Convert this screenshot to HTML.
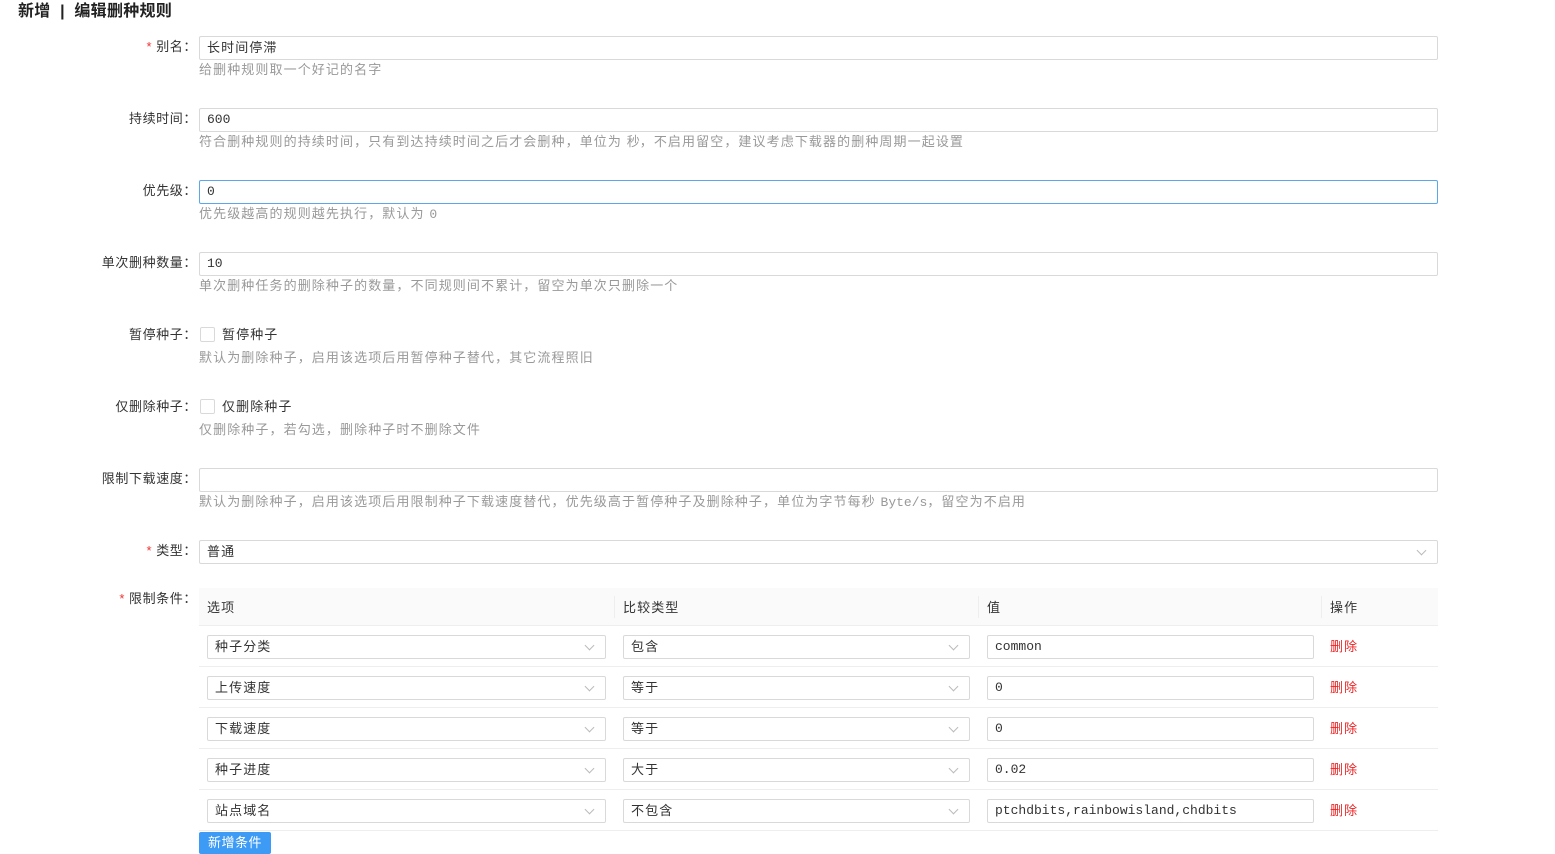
<!DOCTYPE html><html><head><meta charset="utf-8"><style>
*{box-sizing:border-box;margin:0;padding:0}
body{width:1555px;height:852px;overflow:hidden;background:#fff;font-family:"Liberation Sans","Noto Sans CJK SC",sans-serif;font-size:13px;color:#333;position:relative;letter-spacing:1.1px}
.a{position:absolute}
.t{left:18px;top:1px;font-size:16px;font-weight:bold;color:#222;line-height:22px;letter-spacing:0.3px}
.lb{right:1358px;width:200px;text-align:right;line-height:24px;color:#333;letter-spacing:0.6px}
.lb .s{color:#e33;margin-right:4px}
.in{left:199px;width:1239px;height:24px;border:1px solid #d9d9d9;border-radius:2px;line-height:22px;padding-left:7px;font-size:13px}
.mono{font-family:"Liberation Mono","Noto Sans CJK SC",monospace;font-size:13px;letter-spacing:0}
.h{left:199px;color:#999;line-height:18px}
.cb{left:200px;width:15px;height:15px;border:1px solid #d9d9d9;border-radius:2px}
.arr{position:absolute;right:12px;top:6px;width:7px;height:7px;border-right:1px solid #bbb;border-bottom:1px solid #bbb;transform:rotate(45deg)}
.th{top:588px;left:199px;width:1239px;height:38px;background:#fafafa;border-bottom:1px solid #eee}
.th span{position:absolute;top:9px}
.sep{position:absolute;top:8px;width:1px;height:22px;background:#eee}
.row{left:199px;width:1239px;height:41px;border-bottom:1px solid #eee}
.f{position:absolute;top:9px;height:24px;border:1px solid #d9d9d9;border-radius:2px;line-height:22px;padding-left:7px}
.del{position:absolute;left:1131px;top:10px;color:#e22}
.btn{left:199px;top:832px;width:72px;height:22px;background:#3d9bf5;color:#fff;line-height:22px;text-align:center;border-radius:2px;letter-spacing:0.5px}
</style></head><body>
<div class="a t">新增 &nbsp;|&nbsp; 编辑删种规则</div>

<div class="a lb" style="top:35px"><span class="s">*</span>别名：</div>
<div class="a in" style="top:36px">长时间停滞</div>
<div class="a h" style="top:61px">给删种规则取一个好记的名字</div>

<div class="a lb" style="top:107px">持续时间：</div>
<div class="a in mono" style="top:108px">600</div>
<div class="a h" style="top:133px">符合删种规则的持续时间，只有到达持续时间之后才会删种，单位为 <span class="mono">秒</span>，不启用留空，建议考虑下载器的删种周期一起设置</div>

<div class="a lb" style="top:179px">优先级：</div>
<div class="a in mono" style="top:180px;border-color:#5aa8ea">0</div>
<div class="a h" style="top:205px">优先级越高的规则越先执行，默认为 <span class="mono">0</span></div>

<div class="a lb" style="top:251px">单次删种数量：</div>
<div class="a in mono" style="top:252px">10</div>
<div class="a h" style="top:277px">单次删种任务的删除种子的数量，不同规则间不累计，留空为单次只删除一个</div>

<div class="a lb" style="top:323px">暂停种子：</div>
<div class="a cb" style="top:327px"></div>
<div class="a" style="left:222px;top:323px;line-height:24px">暂停种子</div>
<div class="a h" style="top:349px">默认为删除种子，启用该选项后用暂停种子替代，其它流程照旧</div>

<div class="a lb" style="top:395px">仅删除种子：</div>
<div class="a cb" style="top:399px"></div>
<div class="a" style="left:222px;top:395px;line-height:24px">仅删除种子</div>
<div class="a h" style="top:421px">仅删除种子，若勾选，删除种子时不删除文件</div>

<div class="a lb" style="top:467px">限制下载速度：</div>
<div class="a in" style="top:468px"></div>
<div class="a h" style="top:493px">默认为删除种子，启用该选项后用限制种子下载速度替代，优先级高于暂停种子及删除种子，单位为字节每秒 <span class="mono">Byte/s</span>，留空为不启用</div>

<div class="a lb" style="top:539px"><span class="s">*</span>类型：</div>
<div class="a in" style="top:540px">普通<i class="arr"></i></div>

<div class="a lb" style="top:587px"><span class="s">*</span>限制条件：</div>
<div class="a th"><span style="left:8px">选项</span><i class="sep" style="left:415px"></i><span style="left:424px">比较类型</span><i class="sep" style="left:779px"></i><span style="left:788px">值</span><i class="sep" style="left:1122px"></i><span style="left:1131px">操作</span></div>

<div class="a row" style="top:626px"><div class="f" style="left:8px;width:399px">种子分类<i class="arr"></i></div><div class="f" style="left:424px;width:347px">包含<i class="arr"></i></div><div class="f mono" style="left:788px;width:327px">common</div><span class="del">删除</span></div>
<div class="a row" style="top:667px"><div class="f" style="left:8px;width:399px">上传速度<i class="arr"></i></div><div class="f" style="left:424px;width:347px">等于<i class="arr"></i></div><div class="f mono" style="left:788px;width:327px">0</div><span class="del">删除</span></div>
<div class="a row" style="top:708px"><div class="f" style="left:8px;width:399px">下载速度<i class="arr"></i></div><div class="f" style="left:424px;width:347px">等于<i class="arr"></i></div><div class="f mono" style="left:788px;width:327px">0</div><span class="del">删除</span></div>
<div class="a row" style="top:749px"><div class="f" style="left:8px;width:399px">种子进度<i class="arr"></i></div><div class="f" style="left:424px;width:347px">大于<i class="arr"></i></div><div class="f mono" style="left:788px;width:327px">0.02</div><span class="del">删除</span></div>
<div class="a row" style="top:790px"><div class="f" style="left:8px;width:399px">站点域名<i class="arr"></i></div><div class="f" style="left:424px;width:347px">不包含<i class="arr"></i></div><div class="f mono" style="left:788px;width:327px">ptchdbits,rainbowisland,chdbits</div><span class="del">删除</span></div>

<div class="a btn">新增条件</div>
</body></html>
